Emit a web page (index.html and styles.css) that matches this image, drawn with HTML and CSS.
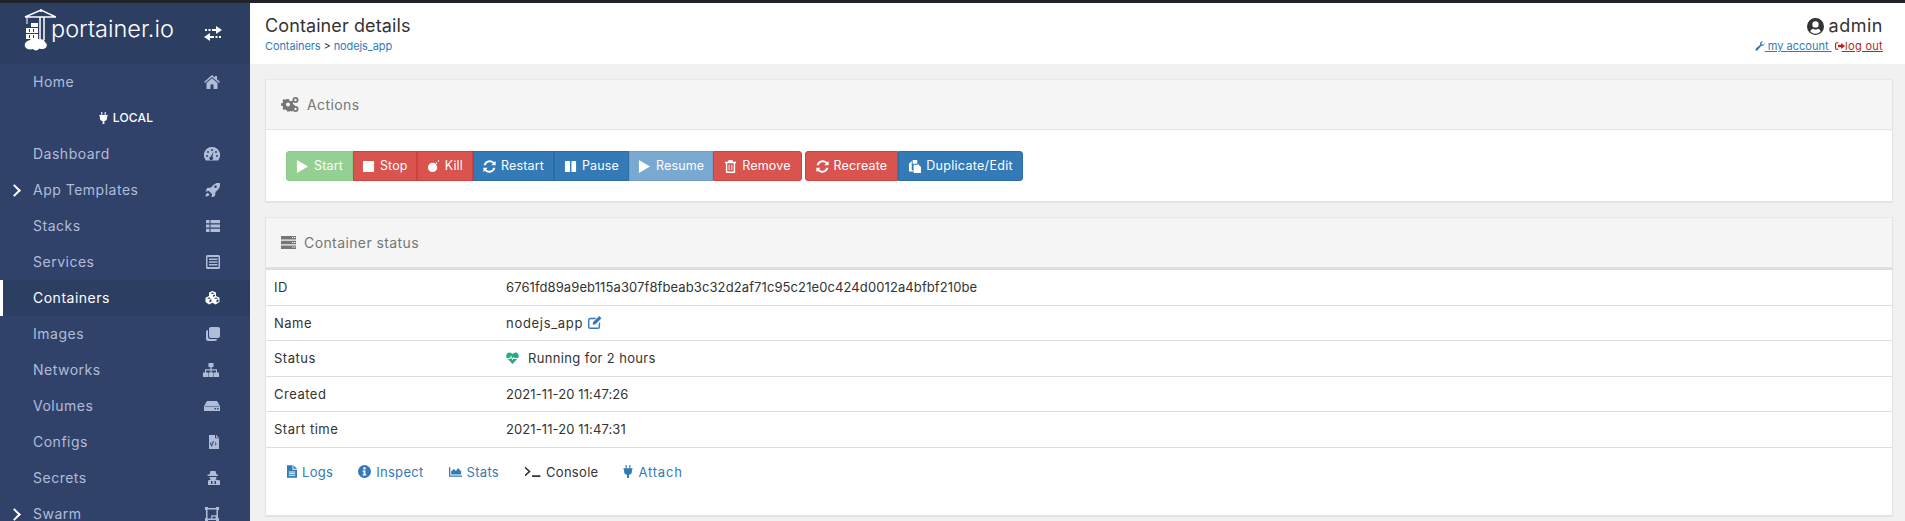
FILE: index.html
```html
<!DOCTYPE html>
<html lang="en">
<head>
    <meta charset="UTF-8">
    <title>Portainer - Container details</title>
    <link rel="stylesheet" href="styles.css">
</head>
<body>
    <svg class="sprite" width="0" height="0">
        <symbol id="i-play" viewBox="0 0 14 14"><path d="M1 0l12 7-12 7z"/></symbol>
        <symbol id="i-refresh" viewBox="0 0 14 14"><path d="M13.6 1v4.6H9l1.700-1.700A4.600 4.600 0 0 0 2.900 5.600H.7A6.700 6.700 0 0 1 12 2.400zM.4 13V8.400H5L3.300 10.100a4.600 4.600 0 0 0 7.800-1.700h2.200A6.700 6.700 0 0 1 2 11.600z"/></symbol>
        <symbol id="i-plug" viewBox="0 0 12 16"><path d="M3 0h1.400v4H7.600V0H9v4h2.600v1.600h-.8V8a4 4 0 0 1-3.600 4v4H4.800v-4A4 4 0 0 1 1.200 8V5.600H.4V4H3z"/></symbol>
    </svg>

    <div class="topline"></div>
    <div class="wrapper">
        <aside class="sidebar">
            <div class="brand">
                <svg class="logo" width="32" height="44" viewBox="0 0 32 44">
                    <path d="M1 8L17 1l15 7M1 8h31M16 8v23M20 8v23M17 0v3" fill="none" stroke="#fff" stroke-width="1.500"/>
                    <path d="M3 8v7" fill="none" stroke="#fff"/>
                    <path fill-rule="evenodd" d="M7 14h7v4H7zM2 19h12v5H2zM2 25h12v5H2zM5 20v3h1v-3zM9 20v3h1v-3zM5 26v3h1v-3zM9 26v3h1v-3z" fill="#fff"/>
                    <path d="M6 31c2-2.500 7-3 9-.5 3-1 6 0 6 3 2.500.5 2.500 5-.5 6-1.500 1-4 .5-5 0-2 2.500-5 2.500-6.500.5-3 1-7 .5-8-2.500S2 32 6 31z" fill="#fff"/>
                </svg>
                <span class="brand-name">portainer.io</span>
                <svg class="swap" width="18" height="15" viewBox="0 0 18 15" fill="#fff">
                    <path d="M12 0l6 4-6 4V5H8V3h4zM1 3h2v2H1zM4.500 3h2v2h-2zM6 7v3h4v2H6v3L0 11zM11.500 10h2v2h-2zM15 10h2v2h-2z"/>
                </svg>
            </div>
            <nav class="menu">
                <a class="menu-item"><span>Home</span>
                    <svg class="menu-icon" viewBox="0 0 16 14"><path d="M8 0l3 2.500V1h2v3.200L16 7l-1 1-7-6-7 6-1-1zM2.500 8L8 3.300 13.500 8v6H9.500V9.500h-3V14H2.500z"/></svg>
                </a>
                <div class="endpoint">
                    <svg class="plug"><use href="#i-plug"/></svg>LOCAL
                </div>
                <a class="menu-item"><span>Dashboard</span>
                    <svg class="menu-icon" viewBox="0 0 16 14"><path fill-rule="evenodd" d="M8 0a8 8 0 0 1 7 12l-.8 1.500H1.800L1 12A8 8 0 0 1 8 0zM8 2a1 1 0 1 0 0 2 1 1 0 0 0 0-2zM4 4a1 1 0 1 0 0 2 1 1 0 0 0 0-2zM12 4a1 1 0 1 0 0 2 1 1 0 0 0 0-2zM3 8a1 1 0 1 0 0 2 1 1 0 0 0 0-2zM13 8a1 1 0 1 0 0 2 1 1 0 0 0 0-2zM9.500 4.500L7 9.500a1.800 1.800 0 1 0 1.500.5z"/></svg>
                </a>
                <a class="menu-item has-sub"><span>App Templates</span>
                    <svg class="menu-icon" viewBox="0 0 16 14"><path fill-rule="evenodd" d="M16 0c.5 4.500-1 7-4.500 9.500L11 13.500 7.500 15 8 11.500 5 8.500l-3.500.5L3 5.500 7 5C9.500 2 12 0 16 0zM11.500 3a1.300 1.300 0 1 0 0 2.600 1.300 1.300 0 0 0 0-2.600z" transform="translate(0 -.5)"/><path d="M3.500 10c1 0 2 1 1.800 2-.8 1.200-2.800 1.500-3.800 1.500 0-1 .5-3 2-3.500z"/></svg>
                </a>
                <a class="menu-item"><span>Stacks</span>
                    <svg class="menu-icon" viewBox="0 0 16 14"><path d="M2 1h3.500v3.200H2zM6.500 1H16v3.200H6.500zM2 5.400h3.500v3.200H2zM6.500 5.400H16v3.200H6.500zM2 9.800h3.500V13H2zM6.500 9.800H16V13H6.500z"/></svg>
                </a>
                <a class="menu-item"><span>Services</span>
                    <svg class="menu-icon" viewBox="0 0 16 14"><path fill-rule="evenodd" d="M3.500 0h11A1.500 1.500 0 0 1 16 1.500v11a1.500 1.500 0 0 1-1.500 1.500h-11A1.500 1.500 0 0 1 2 12.500v-11A1.500 1.500 0 0 1 3.500 0zM3.500 2v10h11V2zM5 3.500h8.500V5H5zM5 6.300h8.500v1.500H5zM5 9h8.500v1.500H5z"/></svg>
                </a>
                <a class="menu-item active"><span>Containers</span>
                    <svg class="menu-icon" viewBox="0 0 16 14"><path fill-rule="evenodd" d="M8.500 0l3.500 1.500V5l3.500 1.700V11l-4 2.500-3-1.700-3.500 1.700L1.500 11V6.700L5 5V1.500zM6.500 2.300L8.500 3l2-.7-2-.8zM9 4.200V6l2-1V3.400zM3 7.300L5 8l2-.7-2-.8zM10 7.300L12 8l2-.7-2-.8zM5.500 9v2.500l2-1V8.200zM12.500 9v2.500l2-1V8.200z"/></svg>
                </a>
                <a class="menu-item"><span>Images</span>
                    <svg class="menu-icon" viewBox="0 0 16 14"><path d="M7 0h7a2 2 0 0 1 2 2v7a2 2 0 0 1-2 2H7a2 2 0 0 1-2-2V2a2 2 0 0 1 2-2z"/><path d="M4 3v6.500A2.500 2.500 0 0 0 6.500 12H13a2 2 0 0 1-2 2H4a2 2 0 0 1-2-2V5a2 2 0 0 1 2-2z"/></svg>
                </a>
                <a class="menu-item wide-icon"><span>Networks</span>
                    <svg class="menu-icon" viewBox="0 0 18 14"><path d="M6.500 0h5v4H9.700v2.200H15V9.500h2V14h-5V9.500h2V7.400H9.700v2.100h1.800V14h-5V9.500h2V7.400H4v2.100h2V14H1V9.500h2V6.200h5.300V4H6.500z"/></svg>
                </a>
                <a class="menu-item"><span>Volumes</span>
                    <svg class="menu-icon" viewBox="0 0 16 14"><path fill-rule="evenodd" d="M4 2h8c1 0 1.500.5 2 1.500L16 7.500V12H0V7.500L2 3.500C2.500 2.500 3 2 4 2zM10.500 9v1.500H12V9zM13 9v1.500h1.500V9zM1 7.600h14V7H1z"/></svg>
                </a>
                <a class="menu-item"><span>Configs</span>
                    <svg class="menu-icon" viewBox="0 0 16 14"><path fill-rule="evenodd" d="M5 0h6l.1 3.300H15V14H5V0zM12 0l3 2.500h-3zM9 6L7 11.500h1L10 6zM7.200 7L5.800 8.700l1.400 1.700.5-.6-.9-1.100.9-1.100zM11.300 7l-.5.600.9 1.100-.9 1.100.5.6 1.400-1.700z"/></svg>
                </a>
                <a class="menu-item"><span>Secrets</span>
                    <svg class="menu-icon" viewBox="0 0 16 14"><path fill-rule="evenodd" d="M6.500 0h5l1 3.500h1.500V5H3.500V3.500h2zM5.500 6h7c0 1-.5 2-1 2.500L16 9.500V14H4V9.500l3-1C6 8 5.500 7 5.500 6zM7 10v3h1.500v-3zM10.500 10v3H12v-3z"/></svg>
                </a>
                <a class="menu-item has-sub"><span>Swarm</span>
                    <svg class="menu-icon" viewBox="0 0 16 14"><path fill-rule="evenodd" d="M1 0h3v1h8V0h3v3h-1v8h1v3h-3v-1H4v1H1v-3h1V3H1zM3.500 2.500v9h3.700V8.200H12.500V2.500zM8.500 9.500v2h3v-2z"/></svg>
                </a>
            </nav>
        </aside>

        <main class="content">
            <header class="page-header">
                <div>
                    <h1 class="page-title">Container details</h1>
                    <div class="crumbs"><a>Containers</a> &gt; <a>nodejs_app</a></div>
                </div>
                <div class="user">
                    <div class="user-name">
                        <svg class="user-icon" viewBox="0 0 16 16"><path fill-rule="evenodd" d="M8 0a8 8 0 1 1 0 16A8 8 0 0 1 8 0zM8 3a3 3 0 1 0 0 6 3 3 0 0 0 0-6zM3.200 12.600a6.500 6.500 0 0 0 9.600 0C12.500 10.800 11 10 10.300 10a4 4 0 0 1-4.600 0C5 10 3.500 10.800 3.200 12.600z"/></svg>admin
                    </div>
                    <div class="user-links">
                        <svg class="tiny-icon blue-icon" viewBox="0 0 12 12"><path d="M11.500 2.500c.5 2-1.500 4-3.800 3.300L3 11c-.6.700-1.600.7-2.100.2S.3 9.700 1 9.100l5.200-4.700C5.500 2 7.500 0 9.500.5L7.700 2.300l.4 1.900 1.900.4z"/></svg><a class="link-blue">&nbsp;my account&nbsp;</a>
                        <svg class="tiny-icon red-icon" viewBox="0 0 13 12"><path d="M4.500 1v1.500H2.200c-.4 0-.7.300-.7.700v5.600c0 .4.300.7.700.7h2.300V11H2A2 2 0 0 1 0 9V3a2 2 0 0 1 2-2zM8 2l5 4-5 4V7.600H4V4.400h4z"/></svg><a class="link-red">&nbsp;log out</a>
                    </div>
                </div>
            </header>

            <div class="page-body">
                <section class="widget">
                    <div class="widget-head">
                        <svg class="head-icon" width="18" height="15" viewBox="0 0 18 15"><path fill-rule="evenodd" d="M6 2l1 .2.500 1.500 1.400.6 1.300-.7 1.300 1.300-.7 1.300.6 1.400 1.500.5v2l-1.500.5-.6 1.400.7 1.300-1.300 1.300-1.300-.7-1.400.6L7 14.500H5l-.5-1.500-1.400-.6-1.300.7L.5 11.800l.7-1.300-.6-1.400L-1 8.600V6.600l1.600-.5.6-1.400-.7-1.300L1.800 2.100l1.300.7 1.400-.6L5 2zM6 5.600a2 2 0 1 0 0 4 2 2 0 0 0 0-4z" transform="translate(1 0)"/><path fill-rule="evenodd" d="M14.500 0a3 3 0 1 1 0 6 3 3 0 0 1 0-6zM14.500 1.800a1.200 1.200 0 1 0 0 2.400 1.200 1.200 0 0 0 0-2.400zM14.500 9a3 3 0 1 1 0 6 3 3 0 0 1 0-6zM14.500 10.800a1.200 1.200 0 1 0 0 2.400 1.200 1.200 0 0 0 0-2.400z"/></svg>
                        Actions
                    </div>
                    <div class="actions">
                        <div class="btn-group">
                            <a class="btn btn-success disabled"><svg class="btn-icon"><use href="#i-play"/></svg>Start</a>
                            <a class="btn btn-danger btn-tight"><svg class="btn-icon" viewBox="0 0 14 14"><path d="M2 1h10a1 1 0 0 1 1 1v10a1 1 0 0 1-1 1H2a1 1 0 0 1-1-1V2a1 1 0 0 1 1-1z"/></svg>Stop</a>
                            <a class="btn btn-danger"><svg class="btn-icon" viewBox="0 0 14 14"><path d="M6 3a5 5 0 1 1 0 10A5 5 0 0 1 6 3zM9 3.500l1.200-1.200 1 1L10 4.500zM12 0h1v2h-1z"/></svg>Kill</a>
                            <a class="btn btn-primary"><svg class="btn-icon"><use href="#i-refresh"/></svg>Restart</a>
                            <a class="btn btn-primary"><svg class="btn-icon" viewBox="0 0 14 14"><path d="M2 1h3.500a1 1 0 0 1 1 1v10a1 1 0 0 1-1 1H2a1 1 0 0 1-1-1V2a1 1 0 0 1 1-1zM9 1h3a1 1 0 0 1 1 1v10a1 1 0 0 1-1 1H9a1 1 0 0 1-1-1V2a1 1 0 0 1 1-1z"/></svg>Pause</a>
                            <a class="btn btn-primary disabled btn-tight"><svg class="btn-icon"><use href="#i-play"/></svg>Resume</a>
                            <a class="btn btn-danger btn-wide"><svg class="btn-icon" viewBox="0 0 14 14"><path fill-rule="evenodd" d="M5 0h4l1 2h3v1.500h-1V13a1 1 0 0 1-1 1H3a1 1 0 0 1-1-1V3.500H1V2h3zM3.500 3.500V12.500h7V3.500zM5 5h1v6H5zM8 5h1v6H8z"/></svg>Remove</a>
                        </div>
                        <div class="btn-group">
                            <a class="btn btn-danger btn-wide"><svg class="btn-icon"><use href="#i-refresh"/></svg>Recreate</a>
                            <a class="btn btn-primary btn-long"><svg class="btn-icon" viewBox="0 0 14 14"><path d="M1 4l3-3v10h1.500v1.500H1zM5 0h5v4H5zM6 5h4.500v-1L14 7.500V14H6z"/></svg>Duplicate/Edit</a>
                        </div>
                    </div>
                </section>

                <section class="widget">
                    <div class="widget-head">
                        <svg class="head-icon" width="15" height="15" viewBox="0 0 15 15"><path fill-rule="evenodd" d="M0 1h15v3.500H0zM0 5.700h15v3.500H0zM0 10.400h15v3.500H0zM11 2v1h1.300V2zM13 2v1h1.300V2zM11 6.900v1h1.300v-1zM13 6.900v1h1.300v-1zM11 11.600v1h1.300v-1zM13 11.600v1h1.300v-1z"/></svg>
                        Container status
                    </div>
                    <table class="status-table">
                        <tr><td>ID</td><td class="digits">6761fd89a9eb115a307f8fbeab3c32d2af71c95c21e0c424d0012a4bfbf210be</td></tr>
                        <tr><td>Name</td><td class="name-cell">nodejs_app <svg class="edit-icon" viewBox="0 0 15 14"><path d="M2.500 2H9L7.500 3.500h-5a1 1 0 0 0-1 1v7a1 1 0 0 0 1 1h8a1 1 0 0 0 1-1V8L13 6.500v5a2.500 2.500 0 0 1-2.500 2.500h-8A2.500 2.500 0 0 1 0 11.500v-7A2.500 2.500 0 0 1 2.500 2zM12 0l2.500 2.500L8 9l-3 .5.500-3z"/></svg></td></tr>
                        <tr><td>Status</td><td><svg class="heart-icon" viewBox="0 0 14 13"><path d="M7 13L1.800 7.600h2.600l1-1.600 1.500 3 1.200-2 .6.600h3.500zM.8 6.400C-.6 4 .6.500 3.700.5 5 .5 6.300 1.300 7 2.400 7.700 1.300 9 .5 10.300.5c3.100 0 4.300 3.500 2.900 5.900H9.200l-1.100-1.100L7 7 5.500 4 3.800 6.400z"/></svg>Running for 2 hours</td></tr>
                        <tr><td>Created</td><td class="digits">2021-11-20 11:47:26</td></tr>
                        <tr><td>Start time</td><td class="digits">2021-11-20 11:47:31</td></tr>
                    </table>
                    <div class="tabs">
                        <a class="tab"><svg class="tab-icon icon-narrow" viewBox="0 0 11 14"><path fill-rule="evenodd" d="M0 0h6v5h5v9H0zM7 0l4 4H7zM2 7v1h7V7zM2 9v1h7V9zM2 11v1h7v-1z"/></svg>Logs</a>
                        <a class="tab"><svg class="tab-icon" viewBox="0 0 14 14"><path fill-rule="evenodd" d="M7 0a7 7 0 1 1 0 14A7 7 0 0 1 7 0zM5.800 2.500v2.300h2.400V2.500zM5 6v1.300h1V10H5v1.400h4V10H8V6z"/></svg>Inspect</a>
                        <a class="tab"><svg class="tab-icon" viewBox="0 0 15 14"><path d="M0 2h1.500v9.500H15V13H0zM2.500 10.500V7l3-3 2.500 2.500L10.500 3l3.500 4v3.500z"/></svg>Stats</a>
                        <a class="tab tab-current"><svg class="tab-icon console-icon" viewBox="0 0 17 14"><path d="M1 2l5.500 5L1 12l-1-1.200L4 7 0 3.200zM8 11h9v1.800H8z"/></svg>Console</a>
                        <a class="tab tab-attach"><svg class="tab-icon icon-narrow"><use href="#i-plug"/></svg>Attach</a>
                    </div>
                </section>
            </div>
        </main>
    </div>
</body>
</html>
```

FILE: styles.css
```css
* {
    box-sizing: border-box;
}
html, body {
    height: 521px;
    overflow: hidden;
}
body {
    margin: 0;
    font-family: Inter, "Open Sans", sans-serif;
    font-size: 13px;
    line-height: 1.42857;
    color: #333;
    background-color: #f1f1f1;
}
a {
    color: #337ab7;
    text-decoration: none;
}
.sprite {
    position: absolute;
}
.topline {
    height: 3px;
    background-color: #22222a;
}
.wrapper {
    display: flex;
    height: 518px;
}

/* sidebar */
.sidebar {
    flex: 0 0 250px;
    background-color: #30426a;
    overflow: hidden;
}
.brand {
    display: flex;
    align-items: center;
    height: 61px;
    padding: 0 28px 0 24px;
    background-color: #2d3e63;
    color: #fff;
}
.logo {
    flex: none;
    margin-top: -5px;
}
.brand-name {
    flex: 1;
    margin-top: -10px;
    margin-left: -5px;
    font-size: 23.5px;
    font-weight: 300;
    line-height: 1;
}
.menu-item {
    display: flex;
    align-items: center;
    justify-content: space-between;
    position: relative;
    height: 36px;
    padding: 0 30px 0 33px;
    font-size: 14px;
    letter-spacing: .5px;
    color: #b1bcd8;
}
.menu-icon {
    width: 16px;
    height: 14px;
    fill: #b1bcd8;
}
.wide-icon .menu-icon {
    width: 18px;
}
.menu-item.active {
    border-left: 3px solid #fff;
    padding-left: 30px;
    background-color: #2d3e63;
    color: #fff;
}
.active .menu-icon {
    fill: #fff;
}
.has-sub::before {
    content: "";
    position: absolute;
    left: 10px;
    top: 14px;
    width: 7px;
    height: 7px;
    border-top: 2px solid #fff;
    border-right: 2px solid #fff;
    transform: rotate(45deg);
}
.endpoint {
    display: flex;
    align-items: center;
    justify-content: center;
    gap: 5px;
    height: 36px;
    padding-left: 2px;
    font-size: 12px;
    font-weight: 500;
    letter-spacing: .2px;
    color: #fff;
}
.plug {
    width: 9px;
    height: 12px;
    fill: #fff;
}

/* page header */
.content {
    flex: 1;
    min-width: 0;
}
.page-header {
    display: flex;
    justify-content: space-between;
    height: 61px;
    padding: 12px 22px 0 15px;
    background-color: #fff;
}
.page-title {
    margin: 0;
    font-size: 18px;
    font-weight: 400;
    line-height: 22px;
    letter-spacing: .1px;
}
.crumbs {
    margin-top: 2px;
    font-size: 11px;
    line-height: 15px;
    letter-spacing: -.1px;
}
.user {
    text-align: right;
}
.user-name {
    display: flex;
    align-items: center;
    justify-content: flex-end;
    gap: 5px;
    font-size: 18px;
    line-height: 22px;
    letter-spacing: .5px;
}
.user-icon {
    width: 17px;
    height: 17px;
    fill: #333;
}
.user-links {
    margin-top: 2px;
    font-size: 11px;
    line-height: 15px;
}
.link-blue {
    text-decoration: underline;
}
.link-red {
    margin-left: -3px;
    letter-spacing: .3px;
    color: #ac2925;
    text-decoration: underline;
}
.tiny-icon {
    width: 10px;
    height: 10px;
    vertical-align: -1px;
}
.blue-icon {
    fill: #337ab7;
}
.red-icon {
    fill: #ac2925;
}

/* widgets */
.page-body {
    padding: 15px 12px 0 15px;
}
.widget {
    margin-bottom: 15px;
    background-color: #fff;
    border: 1px solid #e3e3e3;
    border-top-color: #e8e8e8;
    box-shadow: 0 1px 1px rgba(0, 0, 0, .05);
}
.widget-head {
    display: flex;
    align-items: center;
    gap: 8px;
    height: 50px;
    padding-left: 15px;
    font-size: 14px;
    letter-spacing: .4px;
    color: #767676;
    background-color: #f5f5f5;
    border-bottom: 1px solid #e3e3e3;
}
.head-icon {
    fill: #767676;
}
.actions {
    display: flex;
    gap: 3px;
    padding: 21px 20px 20px;
}
.btn-group {
    display: flex;
}
.btn {
    display: flex;
    align-items: center;
    height: 30px;
    padding: 0 9px;
    gap: 5px;
    font-size: 12.5px;
    letter-spacing: .15px;
    color: #fff;
    border: 1px solid transparent;
}
.btn-group .btn:first-child {
    border-radius: 3px 0 0 3px;
}
.btn-group .btn:last-child {
    border-radius: 0 3px 3px 0;
}
.btn-tight {
    padding: 0 8px;
}
.btn-wide {
    padding: 0 10px;
}
.btn-long {
    letter-spacing: .3px;
}
.btn-icon {
    width: 13px;
    height: 13px;
    fill: #fff;
}
.btn-success {
    background-color: #5cb85c;
    border-color: #4cae4c;
}
.btn-danger {
    background-color: #d9534f;
    border-color: #d43f3a;
}
.btn-primary {
    background-color: #337ab7;
    border-color: #2e6da4;
}
.disabled {
    opacity: .65;
}

/* status table */
.status-table {
    width: 100%;
    border-collapse: collapse;
    border-top: 2px solid #ddd;
}
.status-table td {
    padding: 8px;
    letter-spacing: .35px;
    border-bottom: 1px solid #ddd;
}
.status-table td:first-child {
    width: 232px;
    letter-spacing: .5px;
}
.status-table .digits {
    letter-spacing: .1px;
}
.status-table .name-cell {
    letter-spacing: .7px;
}
.edit-icon {
    width: 14px;
    height: 13px;
    fill: #337ab7;
    vertical-align: -1px;
}
.heart-icon {
    width: 13px;
    height: 12px;
    margin-right: 9px;
    fill: #23ae89;
    vertical-align: -1px;
}
.tabs {
    display: flex;
    height: 67px;
    padding: 14px 0 0 21px;
    gap: 25px;
    letter-spacing: .3px;
}
.tab {
    display: flex;
    align-items: center;
    gap: 5px;
    height: 20px;
}
.tab-current {
    color: #333;
}
.tab-attach {
    letter-spacing: .8px;
}
.tab-icon {
    width: 13px;
    height: 13px;
    fill: #337ab7;
}
.icon-narrow {
    width: 10px;
}
.console-icon {
    width: 17px;
    fill: #333;
}
```
